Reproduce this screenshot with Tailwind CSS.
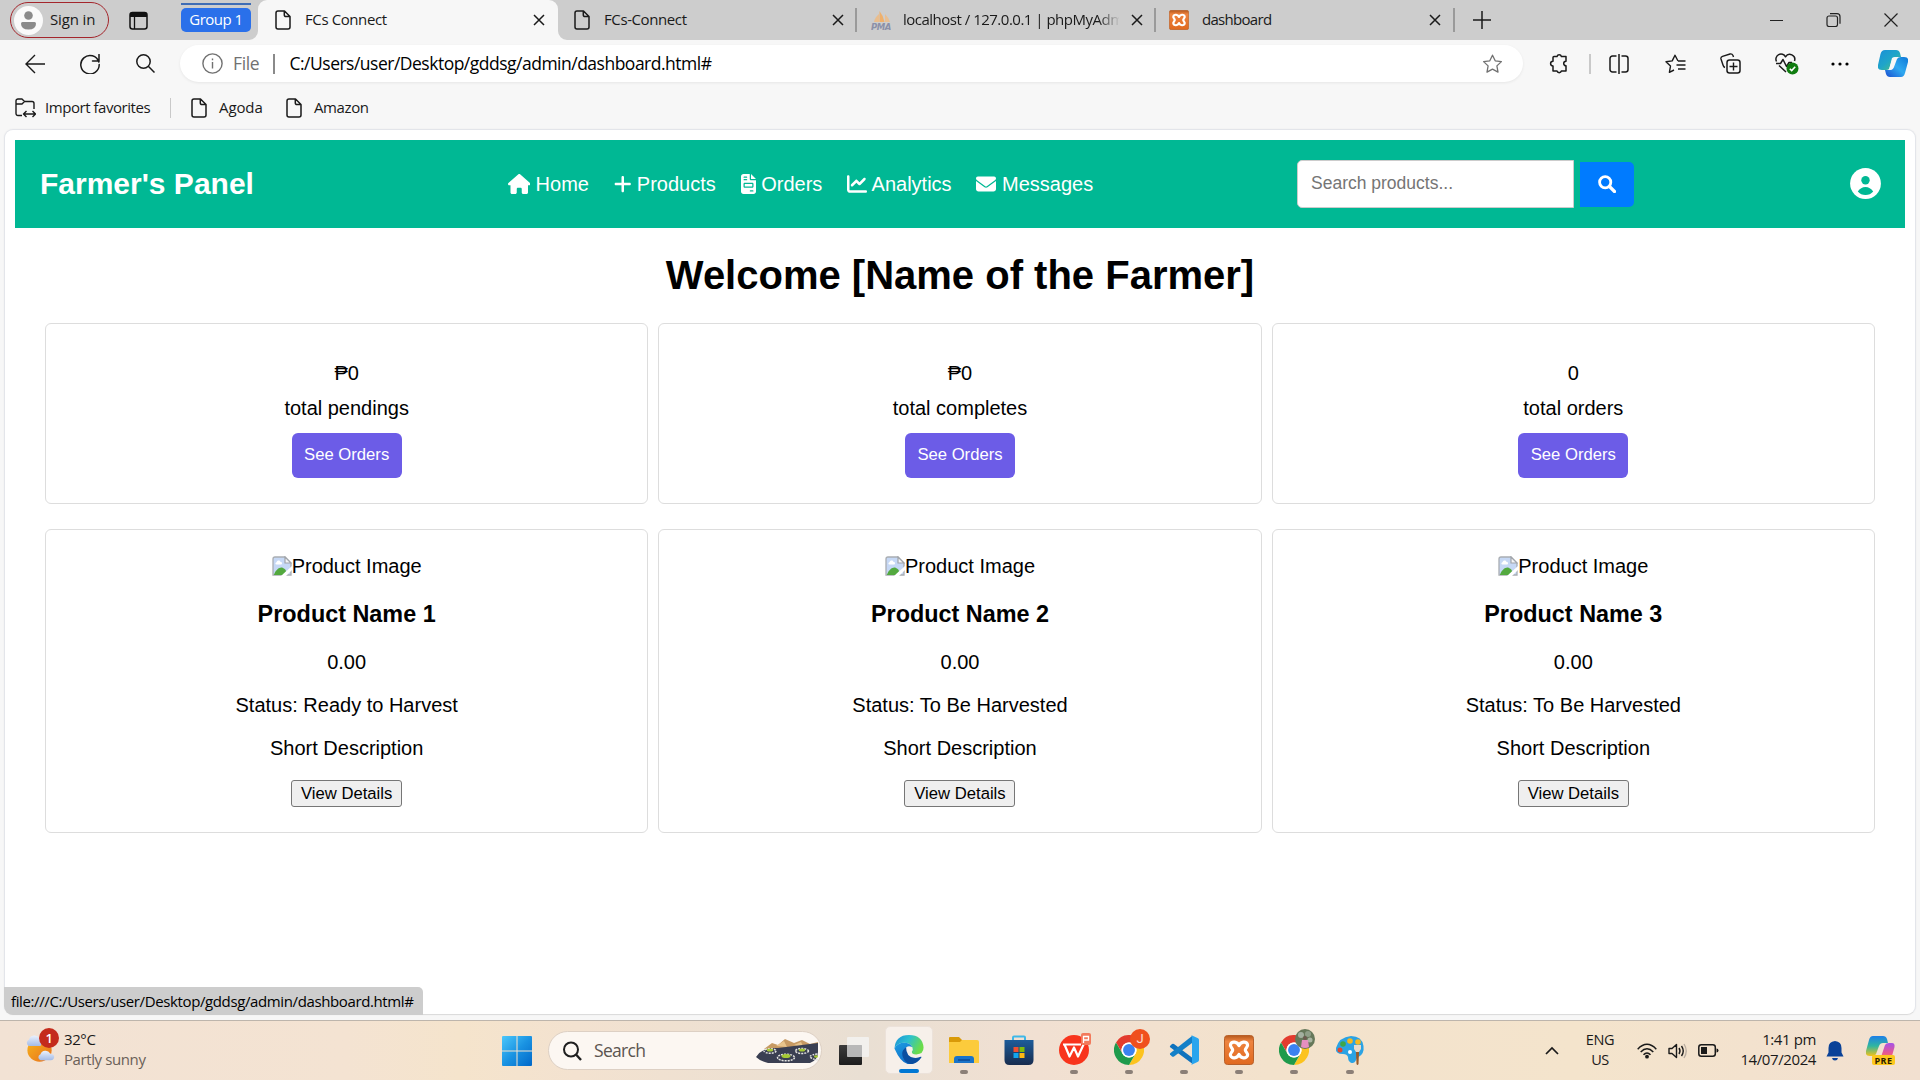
<!DOCTYPE html>
<html lang="en">
<head>
<meta charset="utf-8">
<title>FCs Connect</title>
<script src="https://cdn.jsdelivr.net/npm/@tailwindcss/browser@4"></script>
</head>
<body class="w-[1920px] h-[1080px] overflow-hidden bg-[#f7f7f7] font-['Open_Sans',sans-serif] text-[15px] tracking-[-0.4px] text-[#1a1a1a] flex flex-col">

<svg width="0" height="0" class="absolute">
  <defs>
    <symbol id="doc" viewBox="0 0 16 20"><path d="M3 1h6.5L15 6.5V17a2 2 0 0 1-2 2H3a2 2 0 0 1-2-2V3a2 2 0 0 1 2-2zM9.3 1.2V5a1.6 1.6 0 0 0 1.6 1.6h3.8" fill="none" stroke="#1a1a1a" stroke-width="1.5" stroke-linejoin="round"/></symbol>
    <symbol id="x" viewBox="0 0 12 12"><path d="M1 1l10 10M11 1L1 11" stroke="#1a1a1a" stroke-width="1.5" fill="none"/></symbol>
    <linearGradient id="xg" x1="0" y1="0" x2="0" y2="1"><stop offset="0" stop-color="#b5581c"/><stop offset=".2" stop-color="#ee8440"/><stop offset="1" stop-color="#e0691f"/></linearGradient>
    <symbol id="xampp" viewBox="0 0 30 30"><rect x=".5" y=".5" width="29" height="29" rx="3" fill="url(#xg)" stroke="#b8602a"/><path d="M15 10.500C13 6.500 8 6 6.500 9.300C5.500 12 8.700 13 8.700 15C8.700 17 5.500 18 6.500 20.700C8 24 13 23.500 15 19.500C17 23.500 22 24 23.500 20.700C24.500 18 21.300 17 21.300 15C21.300 13 24.500 12 23.500 9.300C22 6 17 6.500 15 10.500Z" fill="none" stroke="#fff" stroke-width="3.200" stroke-linejoin="round"/></symbol>
    <symbol id="chrome" viewBox="0 0 48 48"><circle cx="24" cy="24" r="23" fill="#fff"/><path d="M24 12h20.800A24 24 0 0 0 3.200 12l10.400 18A12 12 0 0 1 24 12z" fill="#e33b2e"/><path d="M34.400 30L24 48A24 24 0 0 0 44.800 12H24a12 12 0 0 1 10.400 18z" fill="#fcc31e"/><path d="M13.600 30L3.200 12A24 24 0 0 0 24 48l10.400-18a12 12 0 0 1-20.800 0z" fill="#1f9a4b"/><circle cx="24" cy="24" r="12" fill="#fff"/><circle cx="24" cy="24" r="9.500" fill="#3b82f0"/></symbol>
    <symbol id="broken" viewBox="0 0 20 20"><path d="M1 3a2 2 0 0 1 2-2h10l6 6v12H1z" fill="#c6d8f5" stroke="#a9adb2" stroke-width="1.300"/><path d="M4.500 8.500c-1.500 0-1.500-2 0-2.200C5 4 8 4 8.500 6c2-.3 2 2.500.3 2.500z" fill="#fff"/><path d="M2 18.500c2-5 6-8 9-6.500 2 1 3 2 3 3.500l-3.500 3.500H2z" fill="#53a93f"/><path d="M9 20L20 10v4l-6 6z" fill="#fff"/><path d="M13 1v6h6z" fill="#f4f5f7" stroke="#a0a4aa" stroke-width="1.200"/></symbol>
    <linearGradient id="cp1" x1="0" y1="0" x2="1" y2="1"><stop offset="0" stop-color="#1a8fd8"/><stop offset=".5" stop-color="#1fa5c9"/><stop offset="1" stop-color="#58c96a"/></linearGradient>
    <linearGradient id="cp2" x1="1" y1="0" x2="0" y2="1"><stop offset="0" stop-color="#0d78d8"/><stop offset=".5" stop-color="#2fa9f0"/><stop offset="1" stop-color="#1a4fd0"/></linearGradient>
    <linearGradient id="cp3" x1="0" y1="0" x2="0" y2="1"><stop offset="0" stop-color="#1d7fe8"/><stop offset=".5" stop-color="#2fb6a0"/><stop offset="1" stop-color="#f2c21a"/></linearGradient>
    <linearGradient id="cp4" x1="0" y1="0" x2="0" y2="1"><stop offset="0" stop-color="#a553e8"/><stop offset=".6" stop-color="#e8588f"/><stop offset="1" stop-color="#f2923c"/></linearGradient>
  </defs>
</svg>

<!-- tab strip -->
<div class="h-10 shrink-0 bg-[#cdcdcd] flex items-center">
  <div class="ml-[10px] w-[99px] h-[36px] rounded-full border-[1.5px] border-[#a4262c] flex items-center">
    <span class="ml-[3px] w-[29px] h-[29px] rounded-full bg-[#fafafa] flex items-center justify-center"><svg width="15" height="19" viewBox="0 0 15 19"><circle cx="7.500" cy="4.500" r="4.300" fill="#8b8b8b"/><path d="M1.500 11h12q1.500 0 1.500 1.500 0 6-7.500 6T0 12.500Q0 11 1.500 11z" fill="#8b8b8b"/></svg></span>
    <span class="ml-[7px] pb-[2px] whitespace-nowrap tracking-[-0.15px]">Sign in</span>
  </div>
  <svg class="ml-[20px]" width="19" height="19" viewBox="0 0 19 19"><rect x="1" y="1.500" width="17" height="16.500" rx="2.500" fill="none" stroke="#111" stroke-width="1.500"/><path d="M1 6V3.500a2 2 0 0 1 2-2h13a2 2 0 0 1 2 2V6z" fill="#111"/><path d="M5.500 6v12" stroke="#111" stroke-width="1.300"/></svg>
  <div class="ml-[33px] w-[70px] h-full flex flex-col pt-[3px]">
    <div class="h-[2px] bg-[#3f6db5]"></div>
    <div class="mt-[3px] h-[24px] rounded-[5px] bg-[#2a70ea] text-white flex items-center justify-center"><span class="pb-px tracking-[-0.5px]">Group 1</span></div>
  </div>
  <div class="relative ml-[7px] w-[300px] h-full bg-[#f7f7f7] rounded-t-[9px] flex items-center">
    <svg class="absolute -left-[9px] bottom-0" width="9" height="9"><path d="M9 0v9H0A9 9 0 0 0 9 0z" fill="#f7f7f7"/></svg>
    <svg class="absolute -right-[9px] bottom-0" width="9" height="9"><path d="M0 0v9h9A9 9 0 0 1 0 0z" fill="#f7f7f7"/></svg>
    <svg class="ml-[17px]" width="16" height="20"><use href="#doc"/></svg>
    <span class="ml-[14px] w-[210px] pb-[2px] whitespace-nowrap">FCs Connect</span>
    <svg class="ml-[18px]" width="12" height="12"><use href="#x"/></svg>
  </div>
  <div class="w-[299px] h-full flex items-center">
    <svg class="ml-[16px]" width="16" height="20"><use href="#doc"/></svg>
    <span class="ml-[14px] w-[210px] pb-[2px] whitespace-nowrap">FCs-Connect</span>
    <svg class="ml-[18px]" width="12" height="12"><use href="#x"/></svg>
    <div class="ml-auto w-[2px] h-6 bg-[#9a9a9a]"></div>
  </div>
  <div class="w-[299px] h-full flex items-center">
    <svg class="ml-[14px]" width="20" height="20" viewBox="0 0 20 20"><path d="M3 12Q4 7 8 4v8z" fill="#e9bd8d"/><path d="M8.500 12V1q4 5 5 11z" fill="#efb06c"/><path d="M14 12V4q4 4 5 8z" fill="#e8bf93"/><text x="0" y="19.500" font-size="8" font-weight="bold" font-style="italic" font-family="DejaVu Sans" textLength="20" lengthAdjust="spacingAndGlyphs" fill="#8b90a8">PMA</text></svg>
    <span class="ml-[12px] w-[216px] pb-[2px] overflow-hidden whitespace-nowrap tracking-[-0.5px] [mask-image:linear-gradient(to_right,black_195px,transparent_217px)]">localhost / 127.0.0.1 | phpMyAdmin</span>
    <svg class="ml-[12px]" width="12" height="12"><use href="#x"/></svg>
    <div class="ml-auto w-[2px] h-6 bg-[#9a9a9a]"></div>
  </div>
  <div class="w-[299px] h-full flex items-center">
    <svg class="ml-[13px]" width="20" height="20"><use href="#xampp"/></svg>
    <span class="ml-[13px] w-[210px] pb-[2px] whitespace-nowrap tracking-[-0.7px]">dashboard</span>
    <svg class="ml-[17px]" width="12" height="12"><use href="#x"/></svg>
    <div class="ml-auto w-[2px] h-6 bg-[#9a9a9a]"></div>
  </div>
  <svg class="ml-[18px]" width="18" height="18"><path d="M9 0v18M0 9h18" stroke="#1a1a1a" stroke-width="1.500"/></svg>
  <svg class="ml-[279px]" width="128" height="14" viewBox="0 0 128 14"><path d="M0 7.500h13M114.500.500l13 13M127.500.500l-13 13" stroke="#222" fill="none" stroke-width="1.200"/><path d="M59 3h6.500a2 2 0 0 1 2 2v6.500a2 2 0 0 1-2 2H59a2 2 0 0 1-2-2V5a2 2 0 0 1 2-2zM60 .700h7a3 3 0 0 1 3 3v7" fill="none" stroke="#222" stroke-width="1.200"/></svg>
</div>

<!-- toolbar -->
<div class="h-[47px] shrink-0 flex items-center">
  <svg class="ml-[25px]" width="20" height="20" viewBox="0 0 20 20"><path d="M20 10H1M10 1L1 10l9 9" fill="none" stroke="#1a1a1a" stroke-width="1.400"/></svg>
  <svg class="ml-[35px]" width="20" height="20" viewBox="0 0 20 20"><path d="M18.800 8A9.200 9.200 0 1 0 19.200 10.500M19 0.500V7H12.500" fill="none" stroke="#1a1a1a" stroke-width="1.500" stroke-linecap="round"/></svg>
  <svg class="ml-[36px]" width="19" height="19" viewBox="0 0 19 19"><circle cx="7.500" cy="7.500" r="6.700" fill="none" stroke="#1a1a1a" stroke-width="1.500"/><path d="M12.300 12.300L18.500 18.500" stroke="#1a1a1a" stroke-width="1.500"/></svg>
  <div class="ml-[25px] w-[1343px] h-[37px] rounded-full bg-white shadow-[0_1px_3px_rgba(0,0,0,0.07)] flex items-center text-[17.500px]">
    <svg class="ml-[22px]" width="21" height="21" viewBox="0 0 21 21"><circle cx="10.500" cy="10.500" r="9.600" fill="none" stroke="#717171" stroke-width="1.400"/><path d="M10.500 9v6.500M10.500 5.500v1.800" stroke="#717171" stroke-width="1.400"/></svg>
    <span class="ml-[10px] w-[40px] pb-px text-[#717171]">File</span>
    <div class="w-[1.500px] h-5 bg-[#8a8a8a]"></div>
    <span class="ml-[15px] pb-px text-black whitespace-nowrap tracking-[-0.5px]">C:/Users/user/Desktop/gddsg/admin/dashboard.html#</span>
    <svg class="ml-auto mr-[20px]" width="21" height="20" viewBox="0 0 20 20"><path d="M10 1.200l2.700 5.600 6.200.8-4.500 4.300 1.100 6.200-5.500-3-5.500 3 1.100-6.200L1.100 7.600l6.200-.8z" fill="none" stroke="#717171" stroke-width="1.300" stroke-linejoin="round"/></svg>
  </div>
  <svg class="ml-[26px]" width="21" height="21" viewBox="0 0 21 21"><path d="M5 3.500h3a2.300 2.300 0 0 1 4.400 0H17v4.700a2.300 2.300 0 0 0 0 4.600V18h-4.600a2.300 2.300 0 0 1-4.400 0H4v-5a2.300 2.300 0 0 1 0-4.800V4.500a1 1 0 0 1 1-1z" fill="none" stroke="#1a1a1a" stroke-width="1.500" stroke-linejoin="round"/></svg>
  <div class="ml-[19px] w-[1.500px] h-5 bg-[#c9c9c9]"></div>
  <svg class="ml-[18px]" width="20" height="20" viewBox="0 0 20 20"><path d="M7.500 2H3.500a2.500 2.500 0 0 0-2.500 2.500v11A2.500 2.500 0 0 0 3.500 18h4M12.500 2h4A2.500 2.500 0 0 1 19 4.500v11a2.500 2.500 0 0 1-2.500 2.500h-4M10 0v20" fill="none" stroke="#1a1a1a" stroke-width="1.500"/></svg>
  <svg class="ml-[36px]" width="21" height="20" viewBox="0 0 21 20"><path d="M13 7L10 1.200 7.200 6.900l-6.200.8 4.500 4.300-1.100 6.300L9 16M13 7h7.500M11.500 11h9M13 15h7.500" fill="none" stroke="#1a1a1a" stroke-width="1.400" stroke-linejoin="round"/></svg>
  <svg class="ml-[34px]" width="21" height="21" viewBox="0 0 21 21"><path d="M5 14.500Q3.500 14 3 12L1 6Q.500 4 2.500 3.300L10 1q2-.500 3 1.500l.500 1.500" fill="none" stroke="#1a1a1a" stroke-width="1.400"/><rect x="7" y="7" width="13" height="13" rx="2.500" fill="none" stroke="#1a1a1a" stroke-width="1.500"/><path d="M13.500 9.500v8M9.500 13.500h8" stroke="#1a1a1a" stroke-width="1.400"/></svg>
  <svg class="ml-[34px]" width="24" height="22" viewBox="0 0 24 22"><path d="M1.500 8.500A5 5 0 0 1 10.500 3.800 5 5 0 0 1 19.500 8M1 10.500h4.500l2.500-4 3.500 7 2.500-4H17M4 12.500l7 6.500" fill="none" stroke="#1a1a1a" stroke-width="1.500" stroke-linejoin="round"/><circle cx="17.500" cy="15.500" r="6" fill="#107c10"/><path d="M14.800 15.700l1.900 1.900 3.500-3.800" fill="none" stroke="#fff" stroke-width="1.600"/></svg>
  <svg class="ml-[32px]" width="18" height="4"><circle cx="2" cy="2" r="1.600"/><circle cx="9" cy="2" r="1.600"/><circle cx="16" cy="2" r="1.600"/></svg>
  <svg class="ml-[29px]" width="30" height="27" viewBox="0 0 30 27"><path d="M7 0h11q3 0 4 3l1 4h-5q-3 0-4 3l-3 9q-1 1-3 1H4q-5 0-4-5L2.500 4Q3.500 0 7 0z" fill="url(#cp1)"/><path d="M23 27H12q-3 0-4-3l-1-4h5q3 0 4-3l3-8q1-2 4-2h3q5 0 4 5l-3 11q-1 4-4 4z" fill="url(#cp2)"/><path d="M14 8q1-1 4-1h1l-4 11q-1 2-4 2z" fill="#f7f7f7"/></svg>
</div>

<!-- favourites bar -->
<div class="h-[42px] shrink-0 flex items-center">
  <svg class="ml-[15px]" width="21" height="20" viewBox="0 0 21 20"><path d="M7 17.500H3A2 2 0 0 1 1 15.500V3a2 2 0 0 1 2-2h4l2.500 2.500H17a2 2 0 0 1 2 2V11M1 6h6l2.500-2.500M9 16h11M11.500 13L8.500 16l3 3M17.500 13l3 3-3 3" fill="none" stroke="#1a1a1a" stroke-width="1.400" stroke-linejoin="round"/></svg>
  <span class="ml-[9px] w-[125px] pb-px whitespace-nowrap tracking-[-0.45px]">Import favorites</span>
  <div class="w-px h-5 bg-[#c9c9c9]"></div>
  <svg class="ml-[20px]" width="16" height="20"><use href="#doc"/></svg>
  <span class="ml-[12px] w-[67px] pb-px tracking-[-0.1px]">Agoda</span>
  <svg width="16" height="20"><use href="#doc"/></svg>
  <span class="ml-[12px] pb-px">Amazon</span>
</div>

<!-- page viewport -->
<main class="relative ml-[4px] mr-[4px] h-[886px] shrink-0 rounded-[9px] bg-white border border-[#e3e5ea] border-b-[#dcdcdc] shadow-[0_0_2px_rgba(0,0,0,0.06)] font-['Liberation_Sans',Arial,sans-serif] tracking-normal text-[20px] leading-[23px] text-black px-[10px] pt-[10px]">
  <header class="h-[88px] bg-[#00b894] text-white flex items-center">
    <div class="ml-[25px] w-[467.500px] text-[30px] leading-[34px] font-bold">Farmer's Panel</div>
    <nav class="w-[789.500px] flex items-center gap-[24.800px]">
      <a class="flex items-center gap-[5.600px]"><svg width="22.500" height="20" viewBox="0 0 576 512" fill="currentColor"><path d="M575.800 255.500c0 18-15 32.100-32 32.100h-32l.7 160.200c0 2.700-.2 5.400-.5 8.100V472c0 22.100-17.900 40-40 40H392c-22.100 0-40-17.900-40-40V384c0-17.700-14.300-32-32-32H256c-17.700 0-32 14.300-32 32v88c0 22.100-17.900 40-40 40H104c-22.100 0-40-17.900-40-40V287.600H32c-18 0-32-14-32-32.100 0-9 3-17 10-24L266.400 8c7-7 15-8 22-8s15 2 21 7L564.800 231.500c8 7 12 15 11 24z"/></svg>Home</a>
      <a class="flex items-center gap-[5.600px]"><svg width="17.500" height="20" viewBox="0 0 448 512" fill="currentColor"><path d="M256 80c0-17.700-14.300-32-32-32s-32 14.300-32 32V224H48c-17.700 0-32 14.300-32 32s14.300 32 32 32H192V432c0 17.700 14.300 32 32 32s32-14.300 32-32V288H400c17.700 0 32-14.300 32-32s-14.300-32-32-32H256V80z"/></svg>Products</a>
      <a class="flex items-center gap-[5.600px]"><svg width="15" height="20" viewBox="0 0 384 512" fill="currentColor"><path d="M64 0C28.700 0 0 28.700 0 64V448c0 35.300 28.700 64 64 64H320c35.300 0 64-28.700 64-64V160H256c-17.700 0-32-14.300-32-32V0H64zM256 0V128H384L256 0zM80 64h64c8.800 0 16 7.200 16 16s-7.200 16-16 16H80c-8.800 0-16-7.200-16-16s7.200-16 16-16zm0 64h64c8.800 0 16 7.200 16 16s-7.200 16-16 16H80c-8.800 0-16-7.200-16-16s7.200-16 16-16zm16 96H288c17.700 0 32 14.300 32 32v64c0 17.700-14.300 32-32 32H96c-17.700 0-32-14.300-32-32V256c0-17.700 14.300-32 32-32zm0 32v64H288V256H96zM240 416h64c8.800 0 16 7.200 16 16s-7.200 16-16 16H240c-8.800 0-16-7.200-16-16s7.200-16 16-16z"/></svg>Orders</a>
      <a class="flex items-center gap-[4.500px]"><svg width="20" height="20" viewBox="0 0 512 512" fill="currentColor"><path d="M64 64c0-17.700-14.300-32-32-32S0 46.300 0 64V400c0 44.200 35.800 80 80 80H480c17.700 0 32-14.300 32-32s-14.300-32-32-32H80c-8.800 0-16-7.200-16-16V64zm406.600 86.600c12.500-12.500 12.500-32.800 0-45.300s-32.800-12.500-45.300 0L320 210.700l-57.400-57.400c-12.500-12.500-32.800-12.500-45.300 0l-112 112c-12.500 12.500-12.500 32.800 0 45.300s32.800 12.500 45.300 0L240 221.300l57.400 57.400c12.500 12.500 32.800 12.500 45.300 0l128-128z"/></svg>Analytics</a>
      <a class="flex items-center gap-[5.600px]"><svg width="20" height="20" viewBox="0 0 512 512" fill="currentColor"><path d="M48 64C21.500 64 0 85.500 0 112c0 15.100 7.100 29.300 19.200 38.400L236.800 313.600c11.400 8.500 27 8.500 38.400 0L492.800 150.400c12.100-9.100 19.200-23.300 19.200-38.400c0-26.500-21.500-48-48-48H48zM0 176V384c0 35.300 28.700 64 64 64H448c35.300 0 64-28.700 64-64V176L294.400 339.200c-22.800 17.100-54 17.100-76.800 0L0 176z"/></svg>Messages</a>
    </nav>
    <div class="flex items-center">
      <div class="w-[277px] h-[48px] bg-white border border-[#ccc] rounded-l-[5px] px-[13px] pb-px flex items-center text-[17.500px] text-[#757575]">Search products...</div>
      <div class="ml-[6px] w-[54px] h-[45px] bg-[#007bff] rounded-r-[5px] flex items-center justify-center"><svg width="18" height="18" viewBox="0 0 18 18"><circle cx="7.200" cy="7.200" r="5.600" fill="none" stroke="#fff" stroke-width="2.800"/><path d="M11.500 11.500l5 5" stroke="#fff" stroke-width="3.200" stroke-linecap="round"/></svg></div>
    </div>
    <svg class="ml-auto mr-[24px] mb-px" width="31" height="31" viewBox="0 0 31 31"><circle cx="15.500" cy="15.500" r="15.400" fill="#fff"/><circle cx="15.500" cy="12.300" r="4.200" fill="#00b894"/><path d="M7.800 23.500q3-4.500 7.700-4.500t7.700 4.500q-3 3.600-7.700 3.600t-7.700-3.600z" fill="#00b894"/></svg>
  </header>

  <h1 class="mt-[24px] h-[46px] leading-[46px] text-center text-[40px] font-bold">Welcome [Name of the Farmer]</h1>

  <section class="mx-[30px] mt-[25px] grid grid-cols-3 gap-x-[10px] gap-y-[25px] text-center">
    <div class="h-[181px] border border-[#ddd] rounded-[6px] pt-[38px] flex flex-col items-center"><p>₱0</p><p class="mt-[12px]">total pendings</p><a class="mt-[13px] w-[110px] h-[45px] rounded-[6px] bg-[#6c5ce7] text-white text-[16.670px] leading-[19px] pt-[12px]">See Orders</a></div>
    <div class="h-[181px] border border-[#ddd] rounded-[6px] pt-[38px] flex flex-col items-center"><p>₱0</p><p class="mt-[12px]">total completes</p><a class="mt-[13px] w-[110px] h-[45px] rounded-[6px] bg-[#6c5ce7] text-white text-[16.670px] leading-[19px] pt-[12px]">See Orders</a></div>
    <div class="h-[181px] border border-[#ddd] rounded-[6px] pt-[38px] flex flex-col items-center"><p>0</p><p class="mt-[12px]">total orders</p><a class="mt-[13px] w-[110px] h-[45px] rounded-[6px] bg-[#6c5ce7] text-white text-[16.670px] leading-[19px] pt-[12px]">See Orders</a></div>

    <div class="h-[304px] border border-[#ddd] rounded-[6px] pt-[25px] flex flex-col items-center">
      <div class="flex items-center"><svg class="mb-[2px]" width="20" height="20"><use href="#broken"/></svg>Product Image</div>
      <h3 class="mt-[23px] text-[23.400px] leading-[27px] font-bold">Product Name 1</h3>
      <p class="mt-[23px]">0.00</p><p class="mt-[20px]">Status: Ready to Harvest</p><p class="mt-[20px]">Short Description</p>
      <div class="mt-[20px] w-[111px] h-[27px] border border-[#767676] rounded-[3px] bg-[#efefef] text-[16.670px] leading-[25px]">View Details</div>
    </div>
    <div class="h-[304px] border border-[#ddd] rounded-[6px] pt-[25px] flex flex-col items-center">
      <div class="flex items-center"><svg class="mb-[2px]" width="20" height="20"><use href="#broken"/></svg>Product Image</div>
      <h3 class="mt-[23px] text-[23.400px] leading-[27px] font-bold">Product Name 2</h3>
      <p class="mt-[23px]">0.00</p><p class="mt-[20px]">Status: To Be Harvested</p><p class="mt-[20px]">Short Description</p>
      <div class="mt-[20px] w-[111px] h-[27px] border border-[#767676] rounded-[3px] bg-[#efefef] text-[16.670px] leading-[25px]">View Details</div>
    </div>
    <div class="h-[304px] border border-[#ddd] rounded-[6px] pt-[25px] flex flex-col items-center">
      <div class="flex items-center"><svg class="mb-[2px]" width="20" height="20"><use href="#broken"/></svg>Product Image</div>
      <h3 class="mt-[23px] text-[23.400px] leading-[27px] font-bold">Product Name 3</h3>
      <p class="mt-[23px]">0.00</p><p class="mt-[20px]">Status: To Be Harvested</p><p class="mt-[20px]">Short Description</p>
      <div class="mt-[20px] w-[111px] h-[27px] border border-[#767676] rounded-[3px] bg-[#efefef] text-[16.670px] leading-[25px]">View Details</div>
    </div>
  </section>

  <div class="absolute -left-px -bottom-px w-[419px] h-[28px] bg-[#cdcdcd] rounded-tr-[5px] rounded-bl-[9px] flex items-center pl-[7px] font-['Open_Sans',sans-serif] text-[15px] tracking-[-0.380px] whitespace-nowrap">file:///C:/Users/user/Desktop/gddsg/admin/dashboard.html#</div>
</main>

<!-- taskbar -->
<footer class="mt-auto h-[60px] shrink-0 border-t border-[#bdb5ac] bg-[linear-gradient(90deg,#f2e2d4_0%,#f4e3d2_18%,#f5e4cc_24%,#f3e2d0_30%,#e9dfd3_45%,#f1e0d2_54%,#f3e2cc_66%,#f4e4cc_82%,#f2e0d0_100%)] flex items-center">
  <div class="relative ml-[25px] mb-[5px] w-[32px] h-[36px]">
    <svg width="31" height="33" viewBox="0 0 32 36" preserveAspectRatio="none"><defs><linearGradient id="sun" x1="0" y1="0" x2="1" y2="1"><stop offset="0" stop-color="#f7b51c"/><stop offset="1" stop-color="#e8701e"/></linearGradient><linearGradient id="cl" x1="0" y1="0" x2="0" y2="1"><stop offset="0" stop-color="#eaf1fc"/><stop offset="1" stop-color="#a3bbe8"/></linearGradient></defs><circle cx="15" cy="22" r="12.500" fill="url(#sun)"/><path d="M4 17.500a4 4 0 0 1 0-7A6 6 0 0 1 15 9q4 4 1 8.500z" fill="url(#cl)"/><path d="M16 33a3.500 3.500 0 0 1 0-6.500 5.500 5.500 0 0 1 10-1q5 1 4 5-1 2.500-3 2.500z" fill="url(#cl)"/></svg>
    <div class="absolute left-[14px] -top-[2px] w-[20px] h-[20px] rounded-full bg-[#c42b1c] text-white text-[13px] leading-[20px] text-center font-semibold">1</div>
  </div>
  <div class="ml-[7px] w-[438px] mb-[4px] leading-[20px]"><div>32°C</div><div class="text-[#6a6058]">Partly sunny</div></div>
  <svg width="30" height="30" viewBox="0 0 30 30"><defs><linearGradient id="wn" x1="0" y1="0" x2="1" y2="1"><stop offset="0" stop-color="#4cc8fb"/><stop offset=".5" stop-color="#1a93e2"/><stop offset="1" stop-color="#0067c8"/></linearGradient></defs><path d="M1 0h13.500v14.500H0V1q0-1 1-1zM15.500 0H29q1 0 1 1v13.500H15.500zM0 15.500h14.500V30H1q-1 0-1-1zM15.500 15.500H30V29q0 1-1 1H15.500z" fill="url(#wn)"/></svg>
  <div class="ml-[16px] w-[274px] h-[39px] rounded-full bg-[#fcf7f2] border border-[#ddd0c4] flex items-center">
    <svg class="ml-[14px]" width="19" height="20" viewBox="0 0 19 20"><circle cx="8" cy="8.500" r="7" fill="none" stroke="#1f1f1f" stroke-width="2"/><path d="M13 13.500l5 5.500" stroke="#1f1f1f" stroke-width="2.400"/></svg>
    <span class="ml-[12px] text-[17.500px] tracking-[-0.7px] text-[#5b5550]">Search</span>
    <svg class="ml-auto mr-[2px]" width="63" height="26" viewBox="0 0 63 26"><path d="M8 11l8-6 6 2 7-6 9 4 8-3 8 4 8-2v8L30 16z" fill="#c79a63"/><path d="M20 8l8-5 3 6M38 7l7-3 3 6" fill="#e8c48c"/><path d="M0 19Q6 9 22 10L62 5v9q0 8-8 11H12Q4 23 0 19z" fill="#3a3f52"/><g fill="none" stroke="#e3e3e0" stroke-width="1.500" stroke-dasharray="2 1"><ellipse cx="14" cy="13" rx="6" ry="2.300"/><ellipse cx="30" cy="19.500" rx="8.500" ry="3.300"/><ellipse cx="46" cy="13" rx="6.500" ry="2.500"/><path d="M62 22q-7-1-8-3.500 1-2 8-2.500"/></g><g fill="#a5c936"><ellipse cx="14" cy="12" rx="3.200" ry="1.500"/><ellipse cx="30" cy="18" rx="4.500" ry="2"/><ellipse cx="46" cy="12" rx="3.200" ry="1.500"/><ellipse cx="60" cy="18.500" rx="2" ry="1.300"/></g></svg>
  </div>
  <div class="ml-[4px] flex h-full">
    <div class="w-[55px] flex items-center justify-center"><svg width="30" height="30" viewBox="0 0 30 30"><defs><linearGradient id="tv" x1="0" y1="0" x2="0" y2="1"><stop offset="0" stop-color="#3c3c3c"/><stop offset="1" stop-color="#1c1c1c"/></linearGradient></defs><rect x="0" y="9" width="23" height="20" rx="1" fill="url(#tv)"/><rect x="8" y="1" width="22" height="20" rx="1" fill="#f4f4f4" fill-opacity=".8"/><path d="M8 9h15v12H8z" fill="#999" fill-opacity=".4"/></svg></div>
    <div class="w-[55px] flex flex-col items-center pt-[5px]"><div class="w-[48px] h-[48px] rounded-[5px] bg-[#f7f0ea] border border-[#ece2da] flex flex-col items-center pt-[8px]">
      <svg width="30" height="30" viewBox="0 0 30 30"><defs><linearGradient id="e1" x1="0" y1="0" x2="1" y2=".4"><stop offset="0" stop-color="#1a8fd8"/><stop offset=".5" stop-color="#2cc0cf"/><stop offset="1" stop-color="#6bdc4a"/></linearGradient><linearGradient id="e2" x1="0" y1="0" x2=".6" y2="1"><stop offset="0" stop-color="#1b9de2"/><stop offset="1" stop-color="#1168c4"/></linearGradient></defs><path d="M0 14Q1 0 15 0T30 13q0 7-7.500 7-5 0-4.500-3 1.500-2 .5-4.500Q16 8 10 8 3 8 0 14z" fill="url(#e1)"/><path d="M0 14Q3 8 10 8q6 0 8.500 4.500-5-2-7 1-2 3 0 7Q14 26 20 26q4-.5 7-2.500Q23 30 15 30T0 14z" fill="url(#e2)"/><path d="M12 12.500q-6 4-3 11 2 5 7.500 6.500Q23 30 27.500 23.500q1-1.500-.5-1-3 1.500-7 1-8-1.500-8-11z" fill="#0c4fa0"/></svg>
      <div class="mt-[5px] w-[20px] h-[4px] rounded-full bg-[#0078d4]"></div></div></div>
    <div class="w-[55px] flex flex-col items-center pt-[14px]"><svg width="30" height="30" viewBox="0 0 30 30"><path d="M0 3q0-1 1-1h9l3 3v7H0z" fill="#d99a08"/><path d="M0 7h11l2-2h15q2 0 2 2v21H0z" fill="#fccb3c"/><path d="M5 28v-4q0-3 3-3h14q3 0 3 3v4z" fill="#1a74c9"/><path d="M9 25h12" stroke="#0c4a94" stroke-width="1.500"/></svg><div class="mt-[5px] w-[8px] h-[4px] rounded-full bg-[#8b7f77]"></div></div>
    <div class="w-[55px] flex flex-col items-center pt-[14px]"><svg width="30" height="30" viewBox="0 0 30 30"><defs><linearGradient id="st" x1="0" y1="0" x2="0" y2="1"><stop offset="0" stop-color="#1d5c9a"/><stop offset="1" stop-color="#182c4e"/></linearGradient></defs><path d="M9 6V2.500q0-1 1-1h10q1 0 1 1V6" fill="none" stroke="#3fb8e8" stroke-width="2"/><path d="M.5 5h29v20q0 5-5 5h-19q-5 0-5-5z" fill="url(#st)"/><path d="M9.500 12h5v5h-5z" fill="#f05030"/><path d="M15.500 12h5v5h-5z" fill="#80bb0a"/><path d="M9.500 18h5v5h-5z" fill="#12a5ee"/><path d="M15.500 18h5v5h-5z" fill="#fdb912"/></svg></div>
    <div class="w-[55px] flex flex-col items-center pt-[11px]"><svg width="36" height="33" viewBox="-3 -3 36 33"><circle cx="15" cy="15" r="15" fill="#f8341c"/><path d="M4 9.500h18M5.500 9.500l5 12 4.500-9 4 9 6-13" fill="none" stroke="#fff" stroke-width="2.200" stroke-linejoin="round"/><rect x="22" y="-2" width="10" height="12" rx="2" fill="#f27a5c"/><path d="M24.500 8V1.500h5V5h-5" fill="none" stroke="#fff" stroke-width="1.300"/></svg><div class="mt-[5px] w-[8px] h-[4px] rounded-full bg-[#8b7f77]"></div></div>
    <div class="relative w-[55px] flex flex-col items-center pt-[14px]"><svg width="30" height="30"><use href="#chrome"/></svg><div class="absolute left-[29px] top-[8px] w-[20px] h-[20px] rounded-full bg-[#f0501e] text-white/80 text-[13px] leading-[20px] text-center font-['Roboto',sans-serif]">J</div><div class="mt-[5px] w-[8px] h-[4px] rounded-full bg-[#8b7f77]"></div></div>
    <div class="w-[55px] flex flex-col items-center pt-[14px]"><svg width="30" height="30" viewBox="0 0 30 30"><path d="M1 11l2-2q1-.5 2 0l18 13.500v6L1.500 12.500Q.500 12 1 11z" fill="#0f72bd"/><path d="M1 19.500l2 2q1 .5 2 0L23 8V1L1.500 18Q.500 18.800 1 19.500z" fill="#1480c8"/><path d="M22 0l7 3.300q1 .5 1 1.700v20q0 1.200-1 1.700L22 30q1-.5 1-2V2q0-1.500-1-2z" fill="#2aa5ee"/></svg><div class="mt-[5px] w-[8px] h-[4px] rounded-full bg-[#8b7f77]"></div></div>
    <div class="w-[55px] flex flex-col items-center pt-[14px]"><svg width="30" height="30"><use href="#xampp"/></svg><div class="mt-[5px] w-[8px] h-[4px] rounded-full bg-[#8b7f77]"></div></div>
    <div class="relative w-[56px] flex flex-col items-center pt-[14px]"><svg width="30" height="30"><use href="#chrome"/></svg><svg class="absolute left-[29px] top-[8px]" width="20" height="20" viewBox="0 0 20 20"><circle cx="10" cy="10" r="10" fill="#66785a"/><circle cx="6" cy="6" r="3" fill="#a3b0a0"/><circle cx="13" cy="5" r="3" fill="#8f9f88"/><circle cx="15" cy="11" r="2.500" fill="#a9b5a2"/><path d="M7 11h6l1 7q-4 2-8 0z" fill="#e58fc0"/><circle cx="10" cy="9" r="2" fill="#6d5a50"/></svg><div class="mt-[5px] w-[8px] h-[4px] rounded-full bg-[#8b7f77]"></div></div>
    <div class="w-[55px] flex flex-col items-center pt-[14px]"><svg width="30" height="30" viewBox="0 0 30 30"><path d="M16 1Q27 1 28.500 11q1 8-5 11-2 1-3 4-1.500 3-5 1.500Q13 26 13 22q-1-3-5-3Q0 19 1 13 4 2 16 1z" fill="#2ba3e4"/><circle cx="15" cy="6" r="2.800" fill="#f5b81f"/><circle cx="23" cy="7" r="2.800" fill="#f5b81f"/><circle cx="8" cy="9" r="2.800" fill="#3da64a"/><circle cx="5" cy="15" r="2.500" fill="#e0482f"/><circle cx="15" cy="17" r="2" fill="#fff"/><path d="M19 10h7v4l-2 3h-3l-2-3z" fill="#e8d9c8"/><path d="M21 17h3l-.5 12q-1 2-2 0z" fill="#9a5a28"/></svg><div class="mt-[5px] w-[8px] h-[4px] rounded-full bg-[#8b7f77]"></div></div>
  </div>
  <svg class="ml-[168px]" width="14" height="9" viewBox="0 0 14 9"><path d="M1 8l6-6 6 6" fill="none" stroke="#1a1a1a" stroke-width="1.700"/></svg>
  <div class="ml-[20px] mb-[2px] w-[42px] text-center leading-[20px] text-[14.500px]"><div>ENG</div><div>US</div></div>
  <svg class="ml-[16px]" width="20" height="16" viewBox="0 0 20 16"><path d="M.700 6.200Q10-3.500 19.300 6.200M3.700 9Q10 2.500 16.300 9M6.500 11.800Q10 8 13.500 11.800" fill="none" stroke="#1a1a1a" stroke-width="1.500"/><circle cx="10" cy="13.700" r="1.900" fill="#1a1a1a"/></svg>
  <svg class="ml-[11px]" width="20" height="16" viewBox="0 0 20 16"><path d="M1 5.500h3L8.500 1.500v13L4 10.500H1z" fill="none" stroke="#1a1a1a" stroke-width="1.400" stroke-linejoin="round"/><path d="M11 5q2 3 0 6M13.500 3q3.500 5 0 10" fill="none" stroke="#1a1a1a" stroke-width="1.400"/><path d="M16 1q4.500 7 0 14" fill="none" stroke="#b8aca0" stroke-width="1.300"/></svg>
  <svg class="ml-[10px]" width="21" height="13" viewBox="0 0 21 13"><rect x=".8" y=".8" width="16.500" height="11.400" rx="2.500" fill="none" stroke="#1a1a1a" stroke-width="1.500"/><rect x="3" y="3" width="6" height="7" fill="#1a1a1a"/><path d="M18.500 4.500q2 0 2 2t-2 2z" fill="#1a1a1a"/></svg>
  <div class="ml-auto w-[85px] mb-[4px] text-right leading-[20px]"><div>1:41 pm</div><div>14/07/2024</div></div>
  <svg class="ml-[10px]" width="18" height="20" viewBox="0 0 18 20"><path d="M9 0q6.500.5 6.500 7v4.500l2 4H.5l2-4V7Q2.500.500 9 0zM6 17h6q-.5 2.500-3 2.500T6 17z" fill="#0a4298"/></svg>
  <svg class="ml-[22px] mr-[24px]" width="30" height="29" viewBox="0 0 30 29"><path d="M7 0h10q3 0 4 3l1 4h-5q-3 0-4 3l-3 8q-1 2-3 2H4q-5 0-4-5L3 4Q4 0 7 0z" fill="url(#cp3)"/><path d="M14 24l5-15q1-2 4-2h3q3 0 2.500 4L26 20z" fill="url(#cp4)"/><rect x="6" y="19" width="23" height="10" rx="2" fill="#fcc81e"/><text x="17.500" y="27.500" text-anchor="middle" font-size="9" font-weight="bold" font-family="Open Sans" fill="#2a1c00" letter-spacing=".5">PRE</text></svg>
</footer>
</body>
</html>
